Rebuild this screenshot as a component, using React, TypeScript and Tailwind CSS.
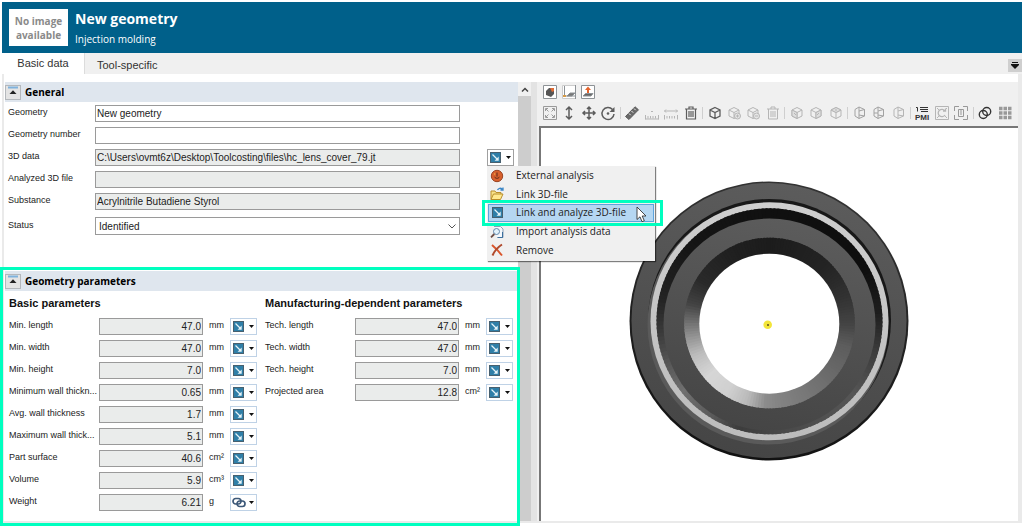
import type { ReactNode } from "react"
import clsx from "clsx"

interface Parameter {
  label: string
  value: string
  unit: string
  linked?: boolean
}

const basicParameters: Parameter[] = [
  { label: "Min. length", value: "47.0", unit: "mm" },
  { label: "Min. width", value: "47.0", unit: "mm" },
  { label: "Min. height", value: "7.0", unit: "mm" },
  { label: "Minimum wall thickn...", value: "0.65", unit: "mm" },
  { label: "Avg. wall thickness", value: "1.7", unit: "mm" },
  { label: "Maximum wall thick...", value: "5.1", unit: "mm" },
  { label: "Part surface", value: "40.6", unit: "cm²" },
  { label: "Volume", value: "5.9", unit: "cm³" },
  { label: "Weight", value: "6.21", unit: "g", linked: true },
]

const manufacturingParameters: Parameter[] = [
  { label: "Tech. length", value: "47.0", unit: "mm" },
  { label: "Tech. width", value: "47.0", unit: "mm" },
  { label: "Tech. height", value: "7.0", unit: "mm" },
  { label: "Projected area", value: "12.8", unit: "cm²" },
]

const toId = (text: string) => text.toLowerCase().replace(/[^a-z0-9]+/g, "-")

function Icon({ children, className }: { children: ReactNode; className?: string }) {
  return (
    <svg
      viewBox="0 0 16 16"
      fill="none"
      stroke="currentColor"
      className={clsx("size-4 shrink-0", className)}
      aria-hidden="true"
    >
      {children}
    </svg>
  )
}

function AnalyzeIcon() {
  return (
    <svg viewBox="0 0 11 11" className="size-[11px] shrink-0" aria-hidden="true">
      <rect x="0.5" y="0.5" width="10" height="10" fill="#2f7fa8" stroke="#47606f" />
      <path d="M2.5 2.5 7.5 7.5" stroke="#e6f3f8" strokeWidth="1.3" />
      <path d="M8.7 4.6v4.1H4.6z" fill="#e6f3f8" />
    </svg>
  )
}

function ChainIcon() {
  return (
    <svg viewBox="0 0 14 11" className="h-[11px] w-[14px] shrink-0" fill="none" stroke="#3c5878" strokeWidth="1.7" aria-hidden="true">
      <rect x="1" y="1.5" width="8" height="5.5" rx="2.7" />
      <rect x="5" y="4" width="8" height="5.5" rx="2.7" />
    </svg>
  )
}

function SplitButton({ label, linked, strong }: { label: string; linked?: boolean; strong?: boolean }) {
  return (
    <button
      type="button"
      aria-label={label}
      className={clsx(
        "flex h-[17px] w-[27px] items-center border bg-white",
        linked ? "pl-px" : "pl-0.5",
        strong ? "border-[#a0a0a0]" : "border-[#bfd2e6]",
      )}
    >
      {linked ? <ChainIcon /> : <AnalyzeIcon />}
      <svg viewBox="0 0 5 3" className="mr-0.5 ml-auto h-[3px] w-[5px]" aria-hidden="true">
        <path d="M0 0h5L2.5 3z" fill="#111" />
      </svg>
    </button>
  )
}

function SectionHeader({ title }: { title: string }) {
  return (
    <div className="flex h-5 items-center gap-1 bg-[#dfe6ee] font-['Open_Sans','Noto_Sans',sans-serif]">
      <button type="button" aria-label={`Collapse ${title}`} className="flex h-[15px] w-4 flex-col items-center border border-[#b4b8bc] bg-[#e4e4e4]">
        <svg viewBox="0 0 14 13" className="h-[13px] w-[14px]" aria-hidden="true">
          <path d="M2 1.5h10" stroke="#7fb2dd" strokeWidth="2" />
          <path d="M3.500 8h7L7 4.300z" fill="#222" />
        </svg>
      </button>
      <h2 className="text-[10px] leading-5 font-bold text-black">{title}</h2>
    </div>
  )
}

interface FieldProps {
  label: string
  value: string
  readOnly?: boolean
}

function TextField({ label, value, readOnly }: FieldProps) {
  const id = toId(label)
  return (
    <div className="flex h-[22px] items-center">
      <label htmlFor={id} className="w-[90px] shrink-0 pl-[3px] text-[9px] whitespace-nowrap">{label}</label>
      <input
        id={id}
        defaultValue={value}
        readOnly={readOnly}
        className={clsx("h-[17px] w-[365px] shrink-0 border border-[#9a9a9a] px-px", readOnly ? "bg-[#eaeceb]" : "bg-white")}
      />
    </div>
  )
}

function ParameterRow({ label, value, unit, linked }: Parameter) {
  const id = toId(label)
  return (
    <div className="flex h-[22px] items-center">
      <label htmlFor={id} className="w-[90px] shrink-0 text-[9px] whitespace-nowrap">{label}</label>
      <input id={id} defaultValue={value} readOnly className="h-[17px] w-[104px] border border-[#9a9a9a] bg-[#eaeceb] px-px text-right" />
      <span className="w-[27px] shrink-0 pl-1.5 text-[9px]">{unit}</span>
      <SplitButton label={`${label} source`} linked={linked} />
    </div>
  )
}

function ParameterGroup({ title, rows }: { title: string; rows: Parameter[] }) {
  return (
    <div className="w-[256px] shrink-0">
      <h3 className="h-6 text-[11px] leading-6 font-bold whitespace-nowrap text-[#111]">{title}</h3>
      {rows.map((row) => (
        <ParameterRow key={row.label} {...row} />
      ))}
    </div>
  )
}

const menuItems = [
  {
    label: "External analysis",
    icon: (
      <Icon>
        <circle cx="8" cy="8" r="5.700" fill="#d8602c" stroke="#9a4423" />
        <path d="M8 4.500V8.500M5.500 8.800c1 2 4 2 5 0" stroke="#5a2a18" />
        <path d="M5 6h1.200" stroke="#f3c34a" />
      </Icon>
    ),
  },
  {
    label: "Link 3D-file",
    icon: (
      <Icon>
        <path d="M2 13.500V5h4l1 1.500h5V8" fill="#f8e28a" stroke="#b98f2c" />
        <path d="M2 13.500 4.500 8H14l-2.500 5.500z" fill="#ffe98f" stroke="#b98f2c" />
        <path d="M8.500 4c1-2 3-2.300 5-.8M14 1.500v2.500h-2.500" stroke="#3b86c6" strokeWidth="1.300" />
      </Icon>
    ),
  },
  { label: "Link and analyze 3D-file", icon: <AnalyzeIcon /> },
  {
    label: "Import analysis data",
    icon: (
      <Icon>
        <path d="M5 2.500h6.500L14 5v8.500H8" fill="#f4f8fc" stroke="#8aa0b8" />
        <path d="M13.500 8v5.500H9" stroke="#3d6f9d" />
        <circle cx="7.500" cy="7.500" r="3" fill="#e3f2fb" stroke="#5f86aa" />
        <path d="m5.300 10-3.300 3.300" stroke="#6b4d45" strokeWidth="1.800" />
      </Icon>
    ),
  },
  {
    label: "Remove",
    icon: (
      <Icon>
        <path d="M3 3c3 2.500 7 6.500 10 10.500" stroke="#d9552b" strokeWidth="2" />
        <path d="M13 2.500C9 5 5.500 9 3.500 13.500" stroke="#b04a2c" strokeWidth="2" />
      </Icon>
    ),
  },
]

function AnalysisMenu() {
  return (
    <div role="menu" className="absolute top-full left-0 z-20 w-[168px] bg-[#f0f0f0] pt-px pb-px font-['Open_Sans','Noto_Sans',sans-serif] text-[10px] text-[#222] shadow-[1px_1px_1px_rgba(0,0,0,0.5)]">
      <div className="grid h-[93px] grid-rows-5">
        {menuItems.map(({ label, icon }) => {
          const active = label === "Link and analyze 3D-file"
          return (
            <div key={label} className="relative flex">
              <button
                type="button"
                role="menuitem"
                className={clsx(
                  "mx-px flex flex-1 items-center border text-left whitespace-nowrap",
                  active ? "border-[#5ea3dc] bg-[#b5d7f2]" : "border-transparent",
                )}
              >
                <span className="flex w-[27px]">
                  <span className="flex w-4 justify-center">{icon}</span>
                </span>
                {label}
              </button>
              {active && (
                <>
                  <span className="pointer-events-none absolute -inset-y-1 -right-2 -left-[5px] border-3 border-[#00ffbf]" />
                  <svg viewBox="0 0 11 17" className="absolute top-0.5 right-2 h-[17px] w-[11px]" aria-hidden="true">
                    <path d="M1 1v12.500l3-2.700 2 4.900 2.300-1-2.100-4.700H10z" fill="#fff" stroke="#333" strokeWidth="0.900" />
                  </svg>
                </>
              )}
            </div>
          )
        })}
      </div>
    </div>
  )
}

const cube = "M8 2.500 13 5v6l-5 2.500L3 11V5zM3 5l5 2.500L13 5M8 7.500v6"
const sectionCube = "M7 2 3 4.500v6.500L7 13.500M7 2l5.500 2.500V11L7 13.500zM7 6l5.500-1.500M7 10l5.500 1"
const trash = "M2 4h12M6 4V2h4v2M3.500 4v10h9V4M6 6v6M8 6v6M10 6v6"
const dark = "text-[#5c5c5c]"
const muted = "text-[#b5b5b5]"

interface Tool {
  label: string
  color: string
  drawing: ReactNode
}

const toolGroups: Tool[][] = [
  [
    {
      label: "Fit all",
      color: "text-[#9a9a9a]",
      drawing: <path d="M1.500 1.500h13v13h-13zM3.500 6V3.500H6M10 3.500h2.500V6M12.500 10v2.500H10M6 12.500H3.500V10M4 4l2.500 2.500M12 4 9.500 6.500M12 12 9.500 9.500M4 12l2.500-2.500" />,
    },
    { label: "Zoom", color: dark, drawing: <path d="M8 2.500v11M5 5l3-3 3 3M5 11l3 3 3-3" strokeWidth="1.500" /> },
    {
      label: "Pan",
      color: dark,
      drawing: <path d="M8 2v12M2 8h12M6 4l2-2 2 2M6 12l2 2 2-2M4 6 2 8l2 2M12 6l2 2-2 2" strokeWidth="1.500" />,
    },
    {
      label: "Rotate",
      color: dark,
      drawing: (
        <>
          <path d="M12.500 4.500A6 6 0 1 0 14 9" strokeWidth="1.500" />
          <path d="M14.500 2v5h-5z" fill="currentColor" stroke="none" />
          <circle cx="8" cy="8.500" r="1.300" fill="currentColor" stroke="none" />
        </>
      ),
    },
  ],
  [
    {
      label: "Measure",
      color: dark,
      drawing: (
        <>
          <path d="M1.500 11.500 11 1.800l3.500 3L5 14.500z" fill="#686868" />
          <path d="m5 8.500 1.700 1.700M7.500 6l1.700 1.700M10 3.500l1.700 1.700" stroke="#eee" />
        </>
      ),
    },
    { label: "Measure point", color: muted, drawing: <path d="M1.500 10v4.500M4 11v2.500M6.500 11v2.500M9 11v2.500M11.500 11v2.500M14.500 10v4.500M7 6.500h2M1.500 14h13" /> },
    { label: "Measure distance", color: muted, drawing: <path d="M1.500 10v4.500M4 11v2.500M6.500 11v2.500M9 11v2.500M11.500 11v2.500M14.500 10v4.500M1.500 6h13M3 4.500 1.500 6 3 7.500M13 4.500 14.500 6 13 7.500" /> },
    { label: "Delete measurements", color: dark, drawing: <path d={trash} strokeWidth="1.200" /> },
  ],
  [
    { label: "Show part", color: dark, drawing: <path d={cube} strokeWidth="1.300" /> },
    {
      label: "Add part",
      color: muted,
      drawing: (
        <>
          <path d={cube} />
          <circle cx="11.500" cy="11" r="3" fill="#e6e6e6" />
          <path d="M11.500 9.500v3M10 11h3" />
        </>
      ),
    },
    {
      label: "Hide part",
      color: muted,
      drawing: (
        <>
          <path d={cube} />
          <circle cx="11.500" cy="11" r="3" fill="#e6e6e6" />
          <path d="M10 11h3" />
        </>
      ),
    },
    { label: "Remove part", color: muted, drawing: <path d={trash} /> },
  ],
  [
    { label: "Front view", color: muted, drawing: <><path d={cube} /><path d="m3 5 5 2.500v6L3 11z" fill="#dedede" /><path d="m5 8 2 2" /></> },
    { label: "Side view", color: muted, drawing: <><path d={cube} /><path d="m13 5-5 2.500v6l5-2.500z" fill="#dedede" /><path d="m9 10 2-2" /></> },
    { label: "Top view", color: muted, drawing: <><path d={cube} /><path d="M8 2.500 13 5 8 7.500 3 5z" fill="#dedede" /><path d="M8 4v2" /></> },
  ],
  [
    { label: "Section X", color: "text-[#a2a2a2]", drawing: <path d={sectionCube} /> },
    { label: "Section Y", color: "text-[#a2a2a2]", drawing: <><path d={sectionCube} /><path d="M3 8h4" /></> },
    { label: "Section Z", color: muted, drawing: <path d={sectionCube} /> },
  ],
  [
    {
      label: "PMI",
      color: "text-[#333]",
      drawing: (
        <>
          <path d="M6 2.500h8M6 4.500h8M7 6.500h7M2 2.500h1.500v4" />
          <text x="8" y="15" textAnchor="middle" fontSize="8" fontWeight="700" fill="currentColor" stroke="none">PMI</text>
        </>
      ),
    },
    {
      label: "Refresh view",
      color: muted,
      drawing: (
        <>
          <path d="M1.500 1.500h13v13h-13zM3 3l2 2M13 3l-2 2M3 13l2-2M13 13l-2-2" />
          <path d="M11 6A3.700 3.700 0 1 0 11 10M11.500 3.500V6H9" strokeWidth="1.300" />
        </>
      ),
    },
    { label: "Frame selection", color: "text-[#999]", drawing: <><path d="M6 1.500H1.500V6M10 1.500h4.500V6M14.500 10v4.500H10M6 14.500H1.500V10" /><path d="M5.500 4.500v7h5v-7zM8 5v5" /></> },
  ],
  [
    { label: "Compare", color: "text-[#333]", drawing: <><circle cx="6.300" cy="9.500" r="4" strokeWidth="1.400" /><circle cx="9.700" cy="6.500" r="4" strokeWidth="1.400" /></> },
    { label: "Grid", color: "text-[#999]", drawing: <path d="M2 3.500h3.500M6.500 3.500H10M11 3.500h3.500M2 8h3.500M6.500 8H10M11 8h3.500M2 12.500h3.500M6.500 12.500H10M11 12.500h3.500" strokeWidth="3.500" /> },
  ],
]

const displayTools: Tool[] = [
  { label: "Solid", color: "text-[#8d9296]", drawing: <><path d="M1.500 1.500h13v13h-13z" fill="#fff" /><path d="M4 7 7 4h5v6l-3 3-5-2z" fill="#555" stroke="none" /><path d="M8 4h4v3l-2 1z" fill="#e06b35" stroke="none" /></> },
  { label: "Sketch plane", color: "text-[#8d9296]", drawing: <><path d="M1.500 1.500h13v13h-13z" fill="#fff" stroke="#ccc" /><path d="M3.500 2v10h11M14.500 1v14" /><path d="M2 12h3" stroke="#d79b46" strokeWidth="2" /><path d="m6 12 3-3h5l-3 3z" fill="#777" /></> },
  { label: "Draft direction", color: "text-[#8d9296]", drawing: <><path d="M1.500 1.500h13v13h-13z" fill="#fff" /><path d="m3 12 2.500-2.500H13L11 12z" fill="#666" /><path d="M8 9V5" stroke="#e4632b" strokeWidth="2" /><path d="M5 6h6L8 2.500z" fill="#e4632b" stroke="none" /></> },
]

function ToolButton({ label, color, drawing }: Tool) {
  return (
    <button type="button" aria-label={label} className={color}>
      <Icon>{drawing}</Icon>
    </button>
  )
}

// [clockwise angle from the top, grey level]
type Shade = [number, number]

const coneShades: Shade[] = [
  [0, 28], [45, 36], [70, 50], [90, 68], [105, 92], [135, 110], [170, 130], [182, 140],
  [195, 185], [210, 208], [228, 214], [245, 190], [258, 150], [270, 110], [283, 66], [300, 42], [330, 32], [360, 28],
]

const grooveShades: Shade[] = [
  [0, 16], [60, 14], [85, 30], [105, 60], [130, 86], [170, 74], [195, 60], [210, 90],
  [230, 112], [245, 90], [262, 60], [280, 36], [310, 22], [360, 16],
]

function shadeAt(stops: Shade[], angle: number) {
  const next = Math.max(1, stops.findIndex(([stop]) => stop >= angle))
  const [a0, g0] = stops[next - 1]
  const [a1, g1] = stops[next]
  const grey = Math.round(g0 + ((angle - a0) / (a1 - a0)) * (g1 - g0))
  return `rgb(${grey} ${grey} ${grey})`
}

function ShadedDisc({ cx, cy, r, stops }: { cx: number; cy: number; r: number; stops: Shade[] }) {
  const point = (deg: number) => {
    const rad = (deg * Math.PI) / 180
    return `${(cx + r * Math.sin(rad)).toFixed(2)} ${(cy - r * Math.cos(rad)).toFixed(2)}`
  }
  return (
    <g>
      {Array.from({ length: 180 }, (_, i) => i * 2).map((angle) => (
        <path
          key={angle}
          d={`M${cx} ${cy}L${point(angle)}A${r} ${r} 0 0 1 ${point(angle + 3)}Z`}
          fill={shadeAt(stops, angle)}
        />
      ))}
    </g>
  )
}

function LensCover() {
  return (
    <svg viewBox="0 0 280 280" className="size-[280px] shrink-0" role="img" aria-label="Lens cover, top view">
      <defs>
        <linearGradient id="face" x1="0.6" y1="0" x2="0.4" y2="1">
          <stop offset="0" stopColor="#5c5c5c" />
          <stop offset="1" stopColor="#454545" />
        </linearGradient>
        <linearGradient id="rim" x1="0.6" y1="0" x2="0.4" y2="1">
          <stop offset="0" stopColor="#333" />
          <stop offset="1" stopColor="#111" />
        </linearGradient>
        <linearGradient id="edge" x1="0" y1="0" x2="0" y2="1">
          <stop offset="0" stopColor="#cecece" />
          <stop offset="1" stopColor="#bcbcbc" />
        </linearGradient>
      </defs>
      <circle cx="140" cy="140" r="139.500" fill="url(#rim)" />
      <circle cx="140" cy="139.500" r="137.500" fill="url(#face)" />
      <circle cx="140.500" cy="139.500" r="121.500" fill="#181818" />
      <circle cx="139" cy="143" r="120.500" fill="#5a5a5a" />
      <circle cx="140.500" cy="140.300" r="119" fill="url(#edge)" />
      <ShadedDisc cx={140.5} cy={140.3} r={113} stops={grooveShades} />
      <circle cx="140.500" cy="143.500" r="106" fill="url(#face)" />
      <ShadedDisc cx={140.5} cy={142} r={85.3} stops={coneShades} />
      <circle cx="140.300" cy="142.700" r="70" fill="#fff" />
      <circle cx="138.700" cy="143.700" r="4.300" fill="#f3e53a" />
      <circle cx="139" cy="144" r="1" fill="#5b4a20" />
    </svg>
  )
}

function PageHeader() {
  return (
    <header className="flex h-[51px] items-center gap-[7px] bg-[#00608a] pl-[7px] font-['Open_Sans','Noto_Sans',sans-serif] text-white">
      <div className="flex h-[37px] w-[59px] items-center justify-center bg-white text-center text-[10px] leading-[14px] font-bold text-[#8a8a8a]">
        No image
        <br />
        available
      </div>
      <div className="pt-0.5">
        <h1 className="text-[14px] leading-5 font-bold">New geometry</h1>
        <p className="text-[10px] leading-5">Injection molding</p>
      </div>
    </header>
  )
}

function Tabs() {
  return (
    <div role="tablist" className="flex h-[21px] bg-[#f0f0f0] font-['Liberation_Sans',sans-serif] text-[11px] text-[#333]">
      <button type="button" role="tab" aria-selected="true" className="w-[83px] border-r border-[#dcdcdc] bg-white">
        Basic data
      </button>
      <button type="button" role="tab" aria-selected="false" className="px-3 pt-1">
        Tool-specific
      </button>
      <button type="button" aria-label="Tab list" className="mt-1.5 ml-auto flex h-[13px] w-[14px] items-center justify-center bg-[#cfcfcf]">
        <svg viewBox="0 0 8 7" className="h-[7px] w-2" aria-hidden="true">
          <path d="M1 .5h6" stroke="#111" />
          <path d="M0 2h8v1L4 7 0 3z" fill="#111" />
        </svg>
      </button>
    </div>
  )
}

function GeneralSection() {
  return (
    <section className="h-[189px]">
      <SectionHeader title="General" />
      <TextField label="Geometry" value="New geometry" />
      <TextField label="Geometry number" value="" />
      <div className="flex justify-between">
        <TextField label="3D data" value="C:\Users\ovmt6z\Desktop\Toolcosting\files\hc_lens_cover_79.jt" readOnly />
        <div className="relative mr-1 self-center">
          <SplitButton label="3D data source" strong />
          <AnalysisMenu />
        </div>
      </div>
      <TextField label="Analyzed 3D file" value="" readOnly />
      <TextField label="Substance" value="Acrylnitrile Butadiene Styrol" readOnly />
      <div className="mt-[3px] flex h-[22px] items-center">
        <label htmlFor="status" className="w-[90px] shrink-0 pl-[3px] text-[9px]">Status</label>
        <div className="relative">
          <select id="status" className="block h-[18px] w-[365px] appearance-none border border-[#9a9a9a] bg-white px-[3px]">
            <option>Identified</option>
          </select>
          <svg viewBox="0 0 8 5" className="pointer-events-none absolute top-[7px] right-1 h-[5px] w-2" fill="none" stroke="#555" aria-hidden="true">
            <path d="m.5.5 3.500 3.500L7.500.5" />
          </svg>
        </div>
      </div>
    </section>
  )
}

function GeometrySection() {
  return (
    <section className="relative flex-1">
      <SectionHeader title="Geometry parameters" />
      <div className="flex pb-2 pl-1">
        <ParameterGroup title="Basic parameters" rows={basicParameters} />
        <ParameterGroup title="Manufacturing-dependent parameters" rows={manufacturingParameters} />
      </div>
      <div className="pointer-events-none absolute -top-1 -right-0.5 -bottom-[5px] -left-[5px] z-10 border-3 border-[#00ffbf]" />
    </section>
  )
}

function Viewer() {
  return (
    <section className="flex min-w-0 flex-1 flex-col bg-[#f0f0f0]">
      <div className="flex flex-col gap-1 px-[5px] pt-px pb-[5px]">
        <div className="flex h-[18px] items-center gap-[3px]">
          {displayTools.map((tool) => (
            <ToolButton key={tool.label} {...tool} />
          ))}
        </div>
        <div className="flex h-4 max-w-[473px] items-center justify-between">
          {toolGroups.map((group, index) => (
            <div key={group[0].label} className="contents">
              {index > 0 && <span className="h-3 w-px bg-[#cfcfcf]" />}
              {group.map((tool) => (
                <ToolButton key={tool.label} {...tool} />
              ))}
            </div>
          ))}
        </div>
      </div>
      <div className="ml-0.5 flex flex-1 items-center justify-center border-t-2 border-l-2 border-[#777] bg-white pr-[22px] pb-2">
        <LensCover />
      </div>
    </section>
  )
}

export default function App() {
  return (
    <div className="flex min-h-screen flex-col bg-white px-0.5 pt-0.5 pb-1">
      <PageHeader />
      <Tabs />
      <main className="flex flex-1 border-r-4 border-b-2 border-l-2 border-[#eaeaea] pt-2 font-['Liberation_Sans',sans-serif] text-[10px] text-[#222]">
        <div className="flex w-[514px] shrink-0 flex-col pl-px">
          <GeneralSection />
          <GeometrySection />
        </div>
        <div className="w-[13px] shrink-0 bg-[#cdcdcd]">
          <button type="button" aria-label="Scroll up" className="flex h-[14px] w-full items-center justify-center bg-[#f0f0f0]">
            <svg viewBox="0 0 8 5" className="h-[5px] w-2" fill="none" stroke="#444" strokeWidth="1.500" aria-hidden="true">
              <path d="M1 4.500 4 1.500l3 3" />
            </svg>
          </button>
        </div>
        <div className="w-1.5 shrink-0 bg-[#e3e3e3]" />
        <Viewer />
      </main>
    </div>
  )
}
